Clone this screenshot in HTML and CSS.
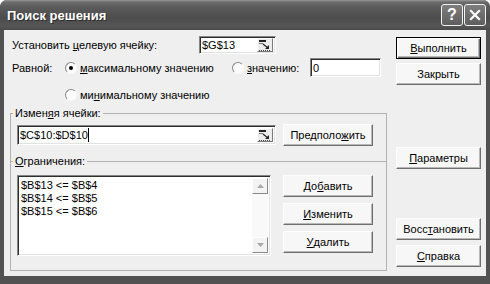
FILE: index.html
```html
<!DOCTYPE html>
<html lang="ru">
<head>
  <meta charset="UTF-8" />
  <meta name="viewport" content="width=device-width, initial-scale=1.0" />
  <title>Поиск решения</title>
  <link rel="stylesheet" href="styles.css">
</head>
<body>
  <div class="window">
    <div class="titlebar">
      <span class="title">Поиск решения</span>
      <span class="cap-btn">?</span>
      <span class="cap-btn">
        <svg width="14" height="14" viewBox="0 0 14 14"><path d="M3 3 L11 11 M11 3 L3 11" stroke="#fff" stroke-width="2.2" stroke-linecap="square"/></svg>
      </span>
    </div>

    <div class="client">
      <div class="main">
        <div class="row row-target">
          <span class="caption target-caption">Установить <u>ц</u>елевую ячейку:</span>
          <div class="edit target-edit">
            <span class="edit-text">$G$13</span>
            <span class="ref-btn">
              <svg width="14" height="12" viewBox="0 0 14 12">
                <rect x="1" y="1" width="7" height="2" fill="#222"/>
                <rect x="1" y="4" width="4" height="1" fill="#777"/>
                <path d="M5 5 L10 9" stroke="#222" stroke-width="1.3"/>
                <polygon points="7,10 11,10 11,6" fill="#222"/>
                <path d="M1 11.5 H13" stroke="#444" stroke-width="1" stroke-dasharray="1 1"/>
              </svg>
            </span>
          </div>
        </div>

        <div class="row row-equal">
          <span class="caption equal-caption">Равной:</span>
          <span class="radio on"></span>
          <span class="opt opt-max"><u>м</u>аксимальному значению</span>
          <span class="radio"></span>
          <span class="opt opt-value"><u>з</u>начению:</span>
          <div class="edit value-edit"><span class="edit-text">0</span></div>
        </div>

        <div class="row row-min">
          <span class="radio"></span>
          <span class="opt">ми<u>н</u>имальному значению</span>
        </div>

        <fieldset class="group group-changing">
          <legend>Измен<u>я</u>я ячейки:</legend>
          <div class="group-row">
            <div class="edit changing-edit">
              <span class="edit-text">$C$10:$D$10</span><span class="caret"></span>
              <span class="ref-btn">
                <svg width="14" height="12" viewBox="0 0 14 12">
                  <rect x="1" y="1" width="7" height="2" fill="#222"/>
                  <rect x="1" y="4" width="4" height="1" fill="#777"/>
                  <path d="M5 5 L10 9" stroke="#222" stroke-width="1.3"/>
                  <polygon points="7,10 11,10 11,6" fill="#222"/>
                  <path d="M1 11.5 H13" stroke="#444" stroke-width="1" stroke-dasharray="1 1"/>
                </svg>
              </span>
            </div>
            <button class="btn group-btn">Предполо<u>ж</u>ить</button>
          </div>
        </fieldset>

        <fieldset class="group group-limits">
          <legend><u>О</u>граничения:</legend>
          <div class="group-row limits-row">
            <div class="listbox">
              <div class="list-items">
                <div>$B$13 &lt;= $B$4</div>
                <div>$B$14 &lt;= $B$5</div>
                <div>$B$15 &lt;= $B$6</div>
              </div>
              <div class="scrollbar">
                <span class="arrow-btn">
                  <svg width="7" height="4" viewBox="0 0 7 4"><polygon points="0,4 7,4 3.5,0" fill="#a8a8a8"/></svg>
                </span>
                <span class="arrow-btn">
                  <svg width="7" height="4" viewBox="0 0 7 4"><polygon points="0,0 7,0 3.5,4" fill="#a8a8a8"/></svg>
                </span>
              </div>
            </div>
            <div class="limit-buttons">
              <button class="btn group-btn">До<u>б</u>авить</button>
              <button class="btn group-btn"><u>И</u>зменить</button>
              <button class="btn group-btn"><u>У</u>далить</button>
            </div>
          </div>
        </fieldset>
      </div>

      <div class="side">
        <button class="btn default btn-run"><u>В</u>ыполнить</button>
        <button class="btn btn-close">Закрыть</button>
        <button class="btn btn-params"><u>П</u>араметры</button>
        <button class="btn btn-reset">Восс<u>т</u>ановить</button>
        <button class="btn btn-help"><u>С</u>правка</button>
      </div>
    </div>
  </div>
</body>
</html>
```

FILE: styles.css
```css
* {
  box-sizing: border-box;
}
body {
  margin: 0;
  font-family: "Liberation Sans", Arial, sans-serif;
  font-size: 11px;
  color: #000;
  background: #fff;
}
.window {
  width: 490px;
  height: 284px;
  display: flex;
  flex-direction: column;
  background: #525252;
  border-radius: 7px 7px 0 0;
  overflow: hidden;
}
.titlebar {
  height: 30px;
  flex: none;
  display: flex;
  align-items: center;
  gap: 1px;
  padding: 0 4px 0 7px;
  background: linear-gradient(to bottom, #9a9a9a 0, #6c6c6c 2px, #5b5b5b 7px, #4c4c4c 18px, #565656 26px, #4a4a4a 30px);
}
.title {
  flex: 1;
  color: #fff;
  font-weight: bold;
  font-size: 13px;
  text-shadow: 1px 1px 0 #2c2c2c;
}
.cap-btn {
  width: 22px;
  height: 22px;
  display: flex;
  align-items: center;
  justify-content: center;
  border: 1px solid #f2f2f2;
  border-radius: 3px;
  background: linear-gradient(to bottom, #7e7e7e, #5e5e5e);
  color: #fff;
  font-weight: bold;
  font-size: 16px;
}
.client {
  flex: 1;
  display: flex;
  gap: 9px;
  margin: 0 4px 8px;
  padding: 6px 5px 0 6px;
  background: #efefef;
}
.main {
  width: 377px;
  flex: none;
}
.row {
  display: flex;
  align-items: center;
}
.caption {
  padding-left: 2px;
}
.row-target {
  height: 18px;
}
.target-caption {
  width: 189px;
}
.row-equal {
  height: 19px;
  margin-top: 4px;
}
.equal-caption {
  width: 55px;
}
.opt {
  margin-left: 3px;
}
.opt-max {
  width: 152px;
}
.opt-value {
  width: 63px;
}
.row-min {
  height: 18px;
  margin-top: 9px;
  padding-left: 55px;
}
.radio {
  width: 12px;
  height: 12px;
  flex: none;
  position: relative;
  border-radius: 50%;
  border: 1px solid;
  border-color: #8a8a8a #fafafa #fafafa #8a8a8a;
  background: #fbfbfb;
}
.radio.on::after {
  content: "";
  position: absolute;
  left: 3px;
  top: 3px;
  width: 4px;
  height: 4px;
  border-radius: 50%;
  background: #000;
}
.edit {
  display: flex;
  align-items: center;
  background: #fff;
  border: 1px solid;
  border-color: #858585 #fff #fff #858585;
  box-shadow: inset 1px 1px 0 #2e2e2e, inset -1px -1px 0 #e2e2e2;
  padding: 0 2px 0 2px;
}
.edit-text {
  flex: none;
}
.target-edit {
  width: 77px;
  height: 18px;
}
.value-edit {
  width: 71px;
  height: 19px;
}
.changing-edit {
  width: 259px;
  height: 20px;
}
.caret {
  width: 1px;
  height: 14px;
  background: #000;
}
.ref-btn {
  width: 16px;
  height: 14px;
  margin-left: auto;
  display: flex;
  align-items: center;
  justify-content: center;
  background: #ececec;
  border: 1px solid;
  border-color: #fff #7a7a7a #7a7a7a #fff;
}
.group {
  margin: 0;
  min-inline-size: 0;
  border: 1px solid #b2b2b2;
  padding: 4px 13px 16px 6px;
}
.group legend {
  padding: 0 2px;
  margin-left: -4px;
  line-height: 13px;
}
.group-changing {
  margin-top: 3px;
  border-bottom: none;
}
.group-limits {
  margin-top: -7px;
  padding: 7px 13px 14px 6px;
}
.group-row {
  display: flex;
  align-items: center;
  gap: 7px;
}
.limits-row {
  align-items: flex-start;
  gap: 12px;
}
.listbox {
  width: 254px;
  height: 81px;
  display: flex;
  background: #fff;
  border: 1px solid;
  border-color: #858585 #fff #fff #858585;
  box-shadow: inset 1px 1px 0 #2e2e2e, inset -1px -1px 0 #e2e2e2;
  padding: 2px 2px 2px 2px;
}
.list-items {
  flex: 1;
  line-height: 13px;
  padding: 1px 0 0 1px;
}
.scrollbar {
  width: 16px;
  display: flex;
  flex-direction: column;
  justify-content: space-between;
  background: #f9f9f9;
}
.arrow-btn {
  width: 16px;
  height: 16px;
  display: flex;
  align-items: center;
  justify-content: center;
  background: #f3f3f3;
  border: 1px solid;
  border-color: #fff #8a8a8a #8a8a8a #fff;
}
.limit-buttons {
  display: flex;
  flex-direction: column;
  gap: 6px;
}
.btn {
  height: 22px;
  display: flex;
  align-items: center;
  justify-content: center;
  padding: 0;
  font: inherit;
  color: #000;
  background: #f7f7f7;
  border: 1px solid;
  border-color: #fdfdfd #6e6e6e #6e6e6e #fdfdfd;
  box-shadow: inset -1px -1px 0 #b8b8b8;
}
.btn.default {
  border-color: #000;
  box-shadow: inset 1px 1px 0 #fff, inset -1px -1px 0 #6e6e6e, inset -2px -2px 0 #b8b8b8;
}
.group-btn {
  width: 90px;
  flex: none;
}
.side {
  width: 85px;
  display: flex;
  flex-direction: column;
}
.btn-run {
  margin-top: 1px;
}
.btn-close {
  margin-top: 4px;
}
.btn-params {
  margin-top: 62px;
}
.btn-reset {
  margin-top: 49px;
}
.btn-help {
  margin-top: 5px;
}
```
